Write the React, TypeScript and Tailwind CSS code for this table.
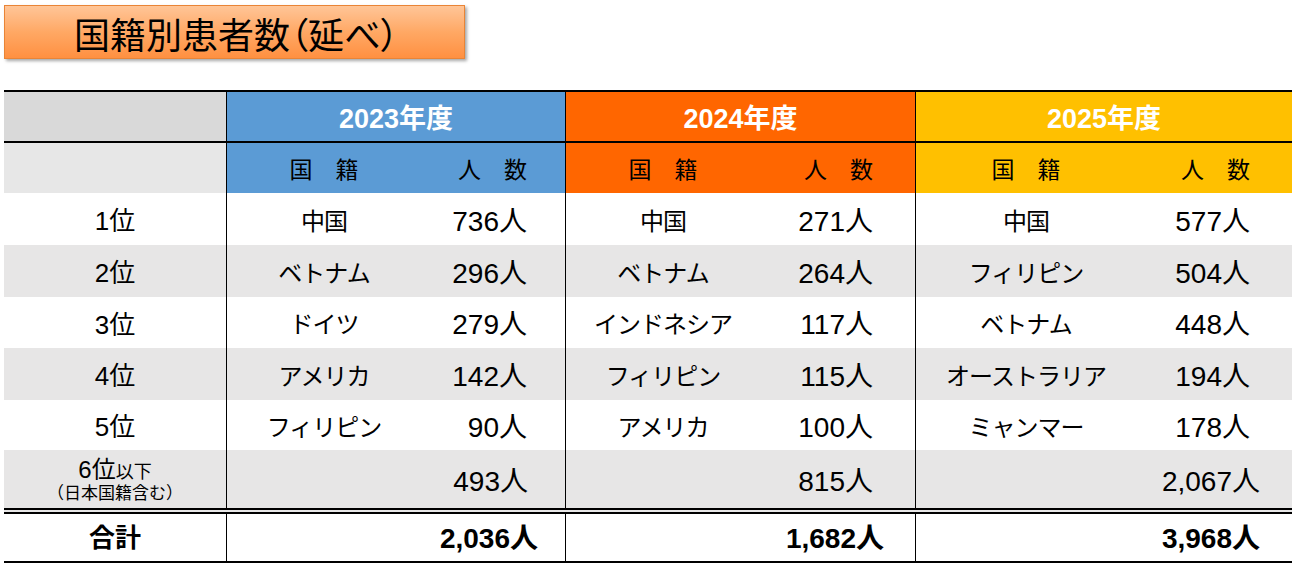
import React from 'react'

type Year = {
  label: string
  headBg: string
  width: string
  natW: string
  pr: string
  rows: [string, string][]
  other: string
  otherPr: string
  total: string
  totalPr: string
}

const YEARS: Year[] = [
  {
    label: '2023年度',
    headBg: 'bg-[#5b9bd5]',
    width: 'w-[339px]',
    natW: 'w-[194px]',
    pr: 'pr-[38px]',
    rows: [
      ['中国', '736人'],
      ['ベトナム', '296人'],
      ['ドイツ', '279人'],
      ['アメリカ', '142人'],
      ['フィリピン', '90人'],
    ],
    other: '493人',
    otherPr: 'pr-[37px]',
    total: '2,036人',
    totalPr: 'pr-[27px]',
  },
  {
    label: '2024年度',
    headBg: 'bg-[#ff6600]',
    width: 'w-[350px]',
    natW: 'w-[194px]',
    pr: 'pr-[42px]',
    rows: [
      ['中国', '271人'],
      ['ベトナム', '264人'],
      ['インドネシア', '117人'],
      ['フィリピン', '115人'],
      ['アメリカ', '100人'],
    ],
    other: '815人',
    otherPr: 'pr-[42px]',
    total: '1,682人',
    totalPr: 'pr-[31px]',
  },
  {
    label: '2025年度',
    headBg: 'bg-[#ffc000]',
    width: 'w-[377px]',
    natW: 'w-[220px]',
    pr: 'pr-[42px]',
    rows: [
      ['中国', '577人'],
      ['フィリピン', '504人'],
      ['ベトナム', '448人'],
      ['オーストラリア', '194人'],
      ['ミャンマー', '178人'],
    ],
    other: '2,067人',
    otherPr: 'pr-[32px]',
    total: '3,968人',
    totalPr: 'pr-[32px]',
  },
]

const ROW_H = ['h-[52px]', 'h-[52px]', 'h-[51px]', 'h-[52px]', 'h-[50px]']
const FONT = "font-['Liberation_Sans','Noto_Sans_CJK_JP',sans-serif]"

function DataRow({ idx }: { idx: number }) {
  const striped = idx % 2 === 1
  return (
    <div className={`flex pt-[5px] ${ROW_H[idx]} ${striped ? 'bg-[#e7e6e6]' : 'bg-white'}`}>
      <div className="w-[222px] flex items-center justify-center text-[26px]">{idx + 1}位</div>
      {YEARS.map(y => (
        <div key={y.label} className={`${y.width} flex border-l border-black -mt-[5px] pt-[5px]`}>
          <div className={`${y.natW} flex items-center justify-center text-[24px] tracking-[-1px]`}>
            {y.rows[idx][0]}
          </div>
          <div className={`flex-1 flex items-center justify-end text-[28px] ${y.pr}`}>
            {y.rows[idx][1]}
          </div>
        </div>
      ))}
    </div>
  )
}

export default function App() {
  return (
    <div className={`w-[1297px] h-[568px] bg-white text-black ${FONT}`}>
      {/* Title */}
      <div className="ml-[4px] pt-[5px]">
        <div className="w-[461px] h-[54px] flex items-center pl-[69px] pt-[2px] border border-[#e98436] bg-gradient-to-b from-[#ffc597] via-[#ffa864] to-[#ff9040] shadow-[2px_2px_3px_rgba(0,0,0,0.35)]">
          <span className="text-[36px] leading-none font-['Noto_Sans_CJK_JP',sans-serif] [font-feature-settings:'palt']">
            国籍別患者数（延べ）
          </span>
        </div>
      </div>

      {/* Table */}
      <div className="ml-[4px] mt-[31px] w-[1288px] border-t-2 border-black">
        {/* year header */}
        <div className="flex h-[51px] border-b-2 border-black">
          <div className="w-[222px] bg-[#d9d9d9]" />
          {YEARS.map(y => (
            <div
              key={y.label}
              className={`${y.width} ${y.headBg} border-l border-black flex items-center justify-center pt-[5px] text-white font-bold text-[27px]`}
            >
              {y.label}
            </div>
          ))}
        </div>
        {/* sub header */}
        <div className="flex h-[50px]">
          <div className="w-[222px] bg-[#e7e7e7]" />
          {YEARS.map(y => (
            <div key={y.label} className={`${y.width} ${y.headBg} flex border-l border-black pt-[5px] text-[23px]`}>
              <div className={`${y.natW} flex items-center justify-center`}>国　籍</div>
              <div className={`flex-1 flex items-center justify-end ${y.pr}`}>人　数</div>
            </div>
          ))}
        </div>
        {[0, 1, 2, 3, 4].map(i => (
          <DataRow key={i} idx={i} />
        ))}
        {/* 6th and below */}
        <div className="flex h-[64px] bg-[#e7e6e6] border-b-[6px] border-double border-black">
          <div className="w-[222px] flex flex-col items-center justify-center leading-none pt-[2px]">
            <div className="text-[24px]">
              6位<span className="text-[18px]">以下</span>
            </div>
            <div className="text-[17px] mt-[3px]">（日本国籍含む）</div>
          </div>
          {YEARS.map(y => (
            <div key={y.label} className={`${y.width} flex border-l border-black`}>
              <div className={y.natW} />
              <div className={`flex-1 flex items-center justify-end pt-[5px] text-[28px] ${y.otherPr}`}>{y.other}</div>
            </div>
          ))}
        </div>
        {/* total */}
        <div className="flex h-[49px] border-b-2 border-black font-bold">
          <div className="w-[222px] flex items-center justify-center pt-[2px] text-[26px]">合計</div>
          {YEARS.map(y => (
            <div key={y.label} className={`${y.width} flex border-l border-black`}>
              <div className={y.natW} />
              <div className={`flex-1 flex items-center justify-end pt-[2px] text-[28px] ${y.totalPr}`}>{y.total}</div>
            </div>
          ))}
        </div>
      </div>
    </div>
  )
}
